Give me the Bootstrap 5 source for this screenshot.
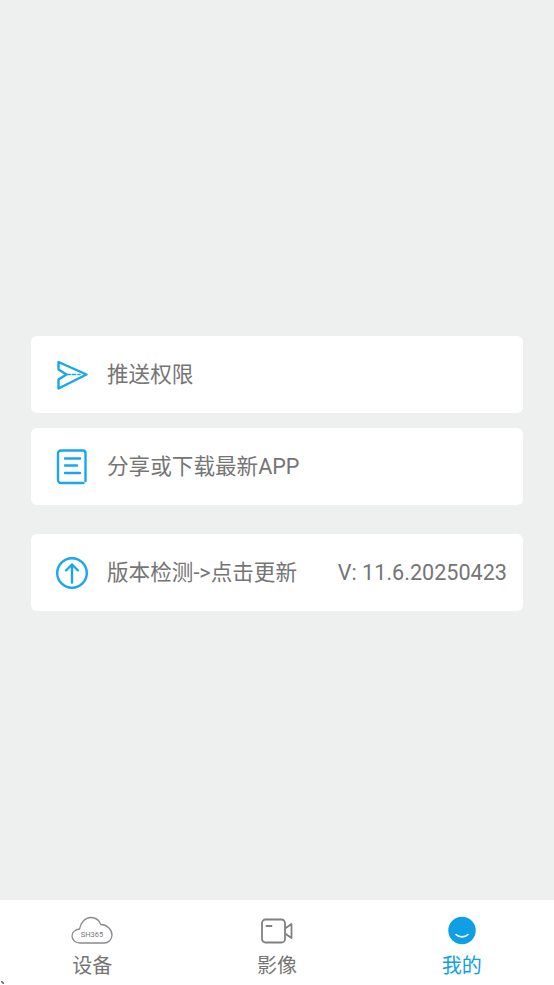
<!DOCTYPE html>
<html lang="zh">
<head>
<meta charset="utf-8">
<title>我的</title>
<link href="https://cdn.jsdelivr.net/npm/bootstrap@5.3.0/dist/css/bootstrap.min.css" rel="stylesheet">
<style>
html,body{height:985px;overflow:hidden}
body{background:#eef0ef;font-family:Roboto,"Noto Sans CJK SC",sans-serif;color:#757575}
.pane{height:900px;padding:335.5px 31px 0 31px}
.tile{height:77px;border-radius:6px;background:#fff;padding:1px 16px 0 25px;font-size:21.6px;line-height:1;white-space:nowrap}
.tile svg{flex:none;margin-right:19px}
.gap-a{margin-bottom:15px}
.gap-b{margin-bottom:29px}
.tabbar{height:85px;background:#fff}
.tabitem{font-size:20px;line-height:24px;color:#757575}
.tabitem svg{display:block;height:32px;margin-top:15px;margin-bottom:7px}
.tabitem.on{color:#0e9fe4}
.cornerdot{position:absolute;left:1px;bottom:1px;width:3px;height:3px;background:linear-gradient(45deg,transparent 20%,#666 45%,#666 60%,transparent 80%)}
</style>
</head>
<body class="position-relative">
<div class="pane">
  <div class="tile gap-a d-flex align-items-center">
    <svg width="32" height="32" viewBox="0 0 32 32" fill="none" stroke="#18a7ee" stroke-width="2.400" stroke-linejoin="round" stroke-linecap="round"><path d="M2.500 3 30.500 15.500 2.500 29.500 2.500 20.500 10.500 15.500 2.500 10.500Z"/><path d="M11 15.500h3.500M16.500 15.500h3M22 15.500h2" stroke-width="1.600"/></svg>
    <span>推送权限</span>
  </div>
  <div class="tile gap-b d-flex align-items-center">
    <svg width="32" height="36" viewBox="0 0 32 36" fill="none" stroke="#18a7ee" stroke-width="2.400" stroke-linecap="round" stroke-linejoin="round"><path d="M27.500 34H5a3 3 0 0 1-3-3V4.500a3 3 0 0 1 3-3h22a2.500 2.500 0 0 1 2.500 2.500V32"/><path d="M9 9.500h15M9 16.500h12M9 24h15"/></svg>
    <span>分享或下载最新APP</span>
  </div>
  <div class="tile gap-b d-flex align-items-center justify-content-between">
    <span class="d-flex align-items-center">
      <svg width="32" height="32" viewBox="0 0 32 32" fill="none" stroke="#18a7ee" stroke-width="2.400" stroke-linecap="round" stroke-linejoin="round"><circle cx="16" cy="16" r="14.800"/><path d="M16 25.500V7.500M10 13.500l6-6 6 6"/></svg>
      <span>版本检测-&gt;点击更新</span>
    </span>
    <span>V: 11.6.20250423</span>
  </div>
</div>
<nav class="tabbar row g-0">
  <div class="col-4 tabitem d-flex flex-column align-items-center">
    <svg width="42" height="32" viewBox="0 0 42 32" fill="none" stroke="#8a8a8a" stroke-width="1.300"><path d="M9 28C4.500 28 1 25 1 21 1 17 4.500 14.500 8.500 14 9.500 8 14 2.500 20 2.500c4.500 0 8 2.500 9.800 7C36 9.500 41 14.500 41 20c0 4.500-3.500 8-8 8Z"/><text x="21" y="21.500" font-size="7.500" text-anchor="middle" fill="#777" stroke="none" font-family="Roboto,sans-serif">SH365</text></svg>
    <span>设备</span>
  </div>
  <div class="col-4 tabitem d-flex flex-column align-items-center">
    <svg width="32" height="32" viewBox="0 0 32 32" fill="none" stroke="#808080" stroke-width="1.800" stroke-linejoin="round"><rect x="1" y="4.500" width="23" height="23" rx="3.500"/><path d="M5.500 11h5" stroke-linecap="round"/><path d="M24 13.500 30.500 9V23L24 18.500"/></svg>
    <span>影像</span>
  </div>
  <div class="col-4 tabitem on d-flex flex-column align-items-center">
    <svg width="28" height="32" viewBox="0 0 28 32"><circle cx="14" cy="15.500" r="13.700" fill="#0e9fe4"/><path d="M8 19.500c3 3.200 9 3.200 12 0" fill="none" stroke="#fff" stroke-width="1.600" stroke-linecap="round"/></svg>
    <span>我的</span>
  </div>
</nav>
<div class="cornerdot"></div>
<script src="https://cdn.jsdelivr.net/npm/bootstrap@5.3.0/dist/js/bootstrap.bundle.min.js"></script>
</body>
</html>
